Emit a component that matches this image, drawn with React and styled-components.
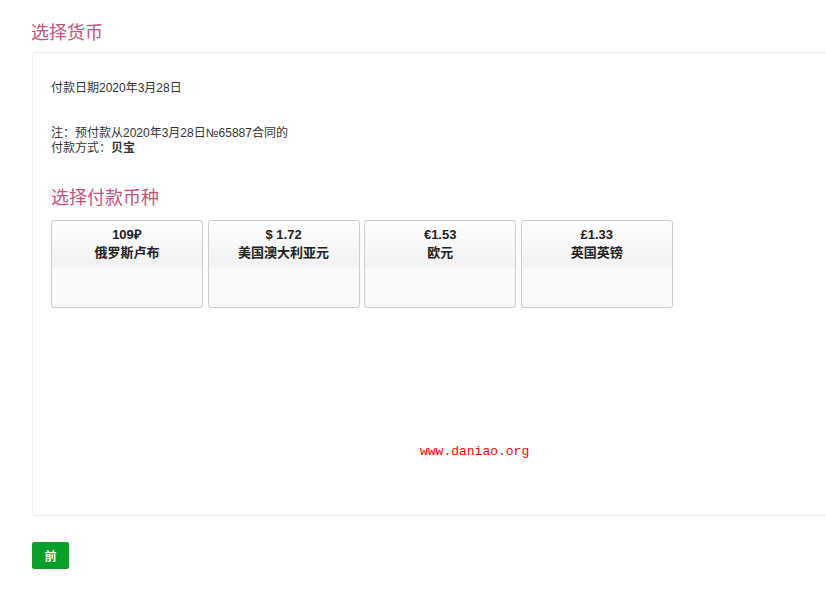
import { styled, createGlobalStyle } from "styled-components";

const GlobalStyle = createGlobalStyle`
  html, body {
    margin: 0;
    padding: 0;
    background: #fff;
    overflow: hidden;
  }
  body {
    font-family: "Liberation Sans", "Noto Sans CJK SC", sans-serif;
    font-size: 12px;
    color: #333;
  }
`;

const Page = styled.div`
  width: 826px;
  height: 594px;
  padding: 21px 0 0 31px;
  box-sizing: border-box;
  position: relative;
`;

const Title = styled.h2`
  margin: 0 0 7px 0;
  font-size: 18px;
  font-weight: normal;
  line-height: 24px;
  color: #c9527d;
`;

const Panel = styled.div`
  width: 820px;
  height: 464px;
  margin-left: 1px;
  box-sizing: border-box;
  border: 1px solid #eee;
  border-radius: 3px;
  padding: 28px 0 0 18px;
  position: relative;
`;

const Line = styled.p`
  margin: 0;
  line-height: 15px;
  font-size: 12px;
`;

const Note = styled.div`
  margin-top: 30px;
`;

const SubTitle = styled.h3`
  margin: 30px 0 10px 0;
  font-size: 18px;
  font-weight: normal;
  line-height: 24px;
  color: #c9527d;
`;

const Cards = styled.div`
  display: flex;
  gap: 4.6px;
`;

const Card = styled.div`
  width: 152px;
  height: 88px;
  box-sizing: border-box;
  border: 1px solid #ccc;
  border-radius: 3px;
  background: linear-gradient(#fff 0%, #f2f2f2 50%, #fafafa 56%, #fafafa 100%);
  display: flex;
  flex-direction: column;
  align-items: center;
  padding-top: 5px;
  font-weight: 600;
  font-size: 13px;
  color: #222;
  line-height: 18px;
`;

const Watermark = styled.div`
  position: absolute;
  left: 387px;
  top: 391px;
  font-family: "Liberation Mono", "DejaVu Sans Mono", monospace;
  font-size: 13px;
  color: #f00;
`;

const Button = styled.button`
  margin: 26px 0 0 1px;
  width: 37px;
  height: 27px;
  border: 1px solid #189a2c;
  border-radius: 2px;
  background: #07a02a;
  color: #fff;
  font-weight: bold;
  font-size: 12px;
  font-family: "Noto Sans CJK SC", sans-serif;
  padding: 0;
`;

const currencies = [
  { amount: "109₽", name: "俄罗斯卢布" },
  { amount: "$ 1.72", name: "美国澳大利亚元" },
  { amount: "€1.53", name: "欧元" },
  { amount: "£1.33", name: "英国英镑" },
];

export default function App() {
  return (
    <>
      <GlobalStyle />
      <Page>
        <Title>选择货币</Title>
        <Panel>
          <Line>付款日期2020年3月28日</Line>
          <Note>
            <Line>注：预付款从2020年3月28日№65887合同的</Line>
            <Line>
              付款方式：<b>贝宝</b>
            </Line>
          </Note>
          <SubTitle>选择付款币种</SubTitle>
          <Cards>
            {currencies.map((c) => (
              <Card key={c.name}>
                <span>{c.amount}</span>
                <span>{c.name}</span>
              </Card>
            ))}
          </Cards>
          <Watermark>www.daniao.org</Watermark>
        </Panel>
        <Button>前</Button>
      </Page>
    </>
  );
}
